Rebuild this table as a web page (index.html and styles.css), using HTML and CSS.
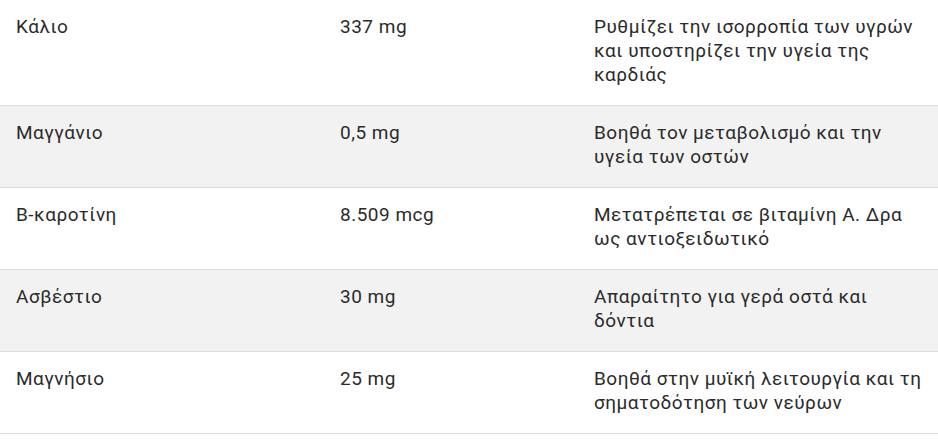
FILE: index.html
```html
<!DOCTYPE html>
<html lang="el">
<head>
<meta charset="utf-8">
<link rel="stylesheet" href="styles.css">
</head>
<body>
<table class="nutr">
  <colgroup>
    <col class="c1"><col class="c2"><col class="c3">
  </colgroup>
  <tbody>
    <tr><td>Κάλιο</td><td>337 mg</td><td>Ρυθμίζει την ισορροπία των υγρών και υποστηρίζει την υγεία της καρδιάς</td></tr>
    <tr class="alt"><td>Μαγγάνιο</td><td>0,5 mg</td><td>Βοηθά τον μεταβολισμό και την υγεία των οστών</td></tr>
    <tr><td>Β-καροτίνη</td><td>8.509 mcg</td><td>Μετατρέπεται σε βιταμίνη Α. Δρα ως αντιοξειδωτικό</td></tr>
    <tr class="alt"><td>Ασβέστιο</td><td>30 mg</td><td>Απαραίτητο για γερά οστά και δόντια</td></tr>
    <tr><td>Μαγνήσιο</td><td>25 mg</td><td>Βοηθά στην μυϊκή λειτουργία και τη σηματοδότηση των νεύρων</td></tr>
  </tbody>
</table>
</body>
</html>
```
FILE: styles.css
```css
html, body {
  margin: 0;
  padding: 0;
  background: #ffffff;
}
.nutr {
  width: 938px;
  border-collapse: collapse;
  table-layout: fixed;
  font-family: Roboto, "Noto Sans", sans-serif;
  font-size: 19px;
  line-height: 24px;
  letter-spacing: 0.5px;
  color: #2b2b2b;
}
.c1 { width: 324px; }
.c2 { width: 254px; }
.c3 { width: 360px; }
.nutr td {
  padding: 15px 16px 18px;
  vertical-align: top;
  border-bottom: 1px solid #dcdcdc;
}
.nutr tr.alt td {
  background: #f2f2f2;
}
```
